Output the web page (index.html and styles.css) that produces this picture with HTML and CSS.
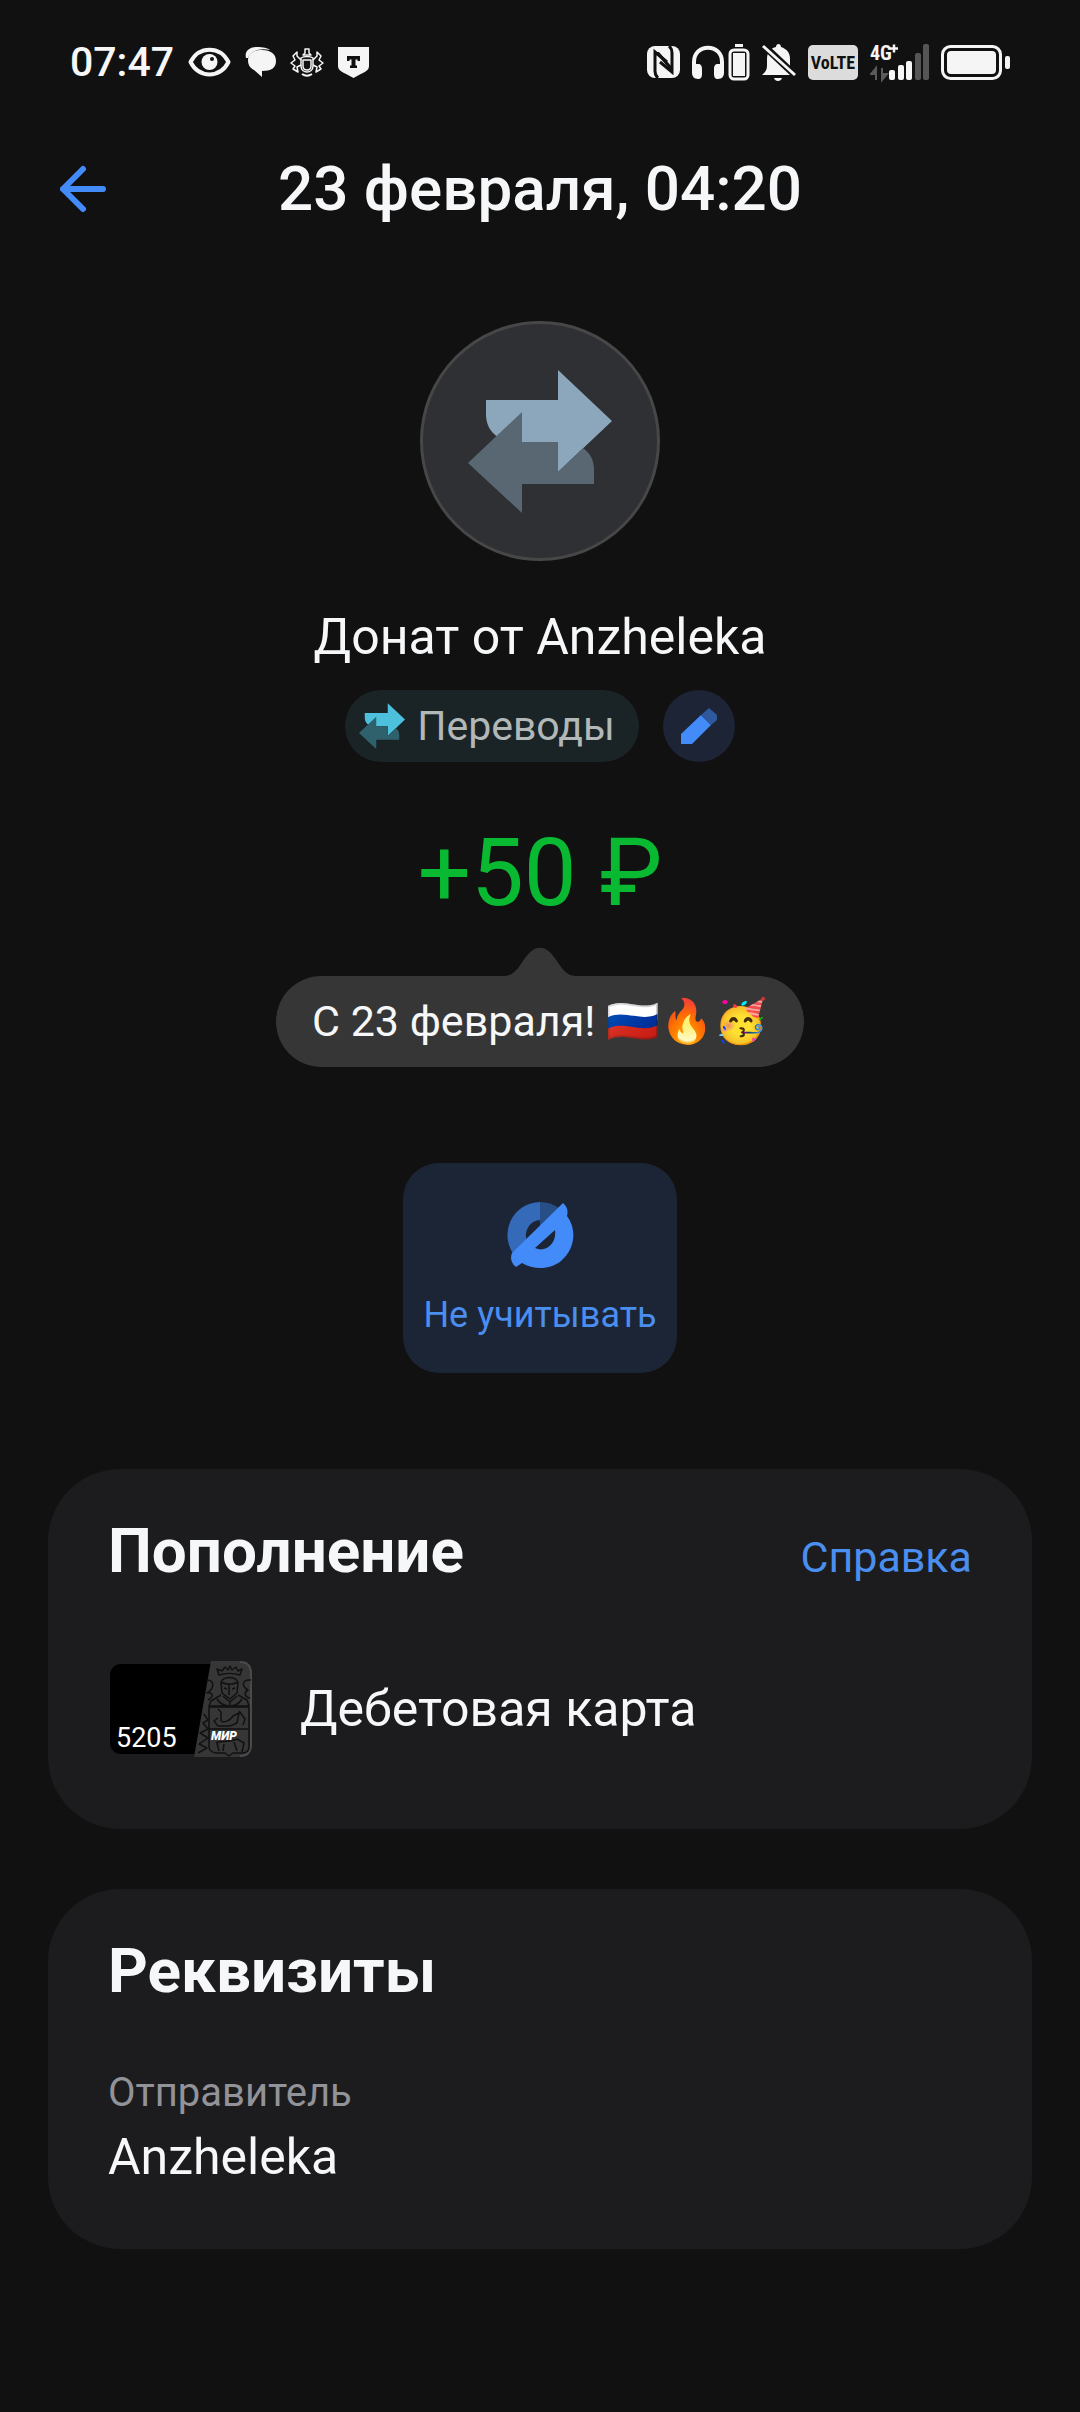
FILE: index.html
```html
<!DOCTYPE html>
<html lang="ru">
<head>
    <meta charset="UTF-8">
    <meta name="viewport" content="width=device-width, initial-scale=1">
    <title>Донат от Anzheleka</title>
    <link rel="stylesheet" href="styles.css">
</head>
<body>
    <div class="status-bar">
        <div class="status-left">
            <span class="time">07:47</span>
            <svg width="43" height="30" viewBox="0 0 43 30" fill="none">
                <path d="M2.500 15C11-1.500 32-1.500 40.500 15C32 31.500 11 31.500 2.500 15Z" stroke="#f5f5f5" stroke-width="4" stroke-linejoin="round"/>
                <circle cx="21.500" cy="15" r="8" fill="#f5f5f5"/>
                <circle cx="24" cy="12" r="2" fill="#111"/>
            </svg>
            <svg width="31" height="32" viewBox="0 0 31 32">
                <path d="M1 12C-1 4 6 1 12 1C18 1 23 2 25 4C16 2 6 4 3 12Z" fill="#f5f5f5"/>
                <path d="M17 4C26 4 31 8 31 15C31 22 26 25 17 25V31L9 24C5 22 3 19 3 14C3 8 8 4 17 4Z" fill="#f5f5f5"/>
            </svg>
            <svg width="34" height="30" viewBox="0 0 34 30" fill="none" stroke="#f5f5f5" stroke-width="1.500" stroke-linejoin="round">
                <path d="M15 2H19V6L21 8H13L15 6Z"/>
                <path d="M11 11C14 9 20 9 23 11V19C23 23 20 25 17 25C14 25 11 23 11 19Z"/>
                <path d="M13 13H21V19C21 22 19 23 17 23C15 23 13 22 13 19Z"/>
                <path d="M11 13L7 9V5L3 9L5 13L1 16L5 19L3 22L8 25L7 20L11 18"/>
                <path d="M23 13L27 9V5L31 9L29 13L33 16L29 19L31 22L26 25L27 20L23 18"/>
                <path d="M12 27C15 29 19 29 22 27" stroke-width="2"/>
            </svg>
            <svg width="31" height="32" viewBox="0 0 31 32">
                <path d="M0 1H31V20C31 25 26 26 15.500 32C5 26 0 25 0 20Z" fill="#f5f5f5"/>
                <path d="M9 10H22V15H19.500V13.500H17.500V19.500H19V22H12V19.500H13.500V13.500H11.500V15H9Z" fill="#111"/>
            </svg>
        </div>
        <div class="status-right">
            <svg width="33" height="32" viewBox="0 0 33 32" fill="none">
                <rect width="33" height="32" rx="8" fill="#f5f5f5"/>
                <path d="M11 32C8.500 30 8 28 8 25V6L20 16" stroke="#111" stroke-width="3"/>
                <path d="M22 0C24.500 2 25 4 25 7V26L13 16" stroke="#111" stroke-width="3"/>
                <path d="M8 6L25 26V21L12 6Z" fill="#111"/>
            </svg>
            <svg width="58" height="37" viewBox="0 0 58 37" fill="none">
                <path d="M2 25V18C2 -1 30 -1 30 18V25" stroke="#f5f5f5" stroke-width="4"/>
                <path d="M0 20H6C9 20 10 22 10 25V30C10 33 9 35 6 35C2 35 0 32 0 29ZM32 20H26C23 20 22 22 22 25V30C22 33 23 35 26 35C30 35 32 32 32 29Z" fill="#f5f5f5"/>
                <path d="M43 1.500H51" stroke="#f5f5f5" stroke-width="3"/>
                <rect x="38" y="6" width="18" height="29" rx="4" stroke="#f5f5f5" stroke-width="3"/>
                <rect x="41" y="9" width="12" height="23" fill="#f5f5f5"/>
            </svg>
            <svg width="34" height="37" viewBox="0 0 34 37">
                <path d="M0 31C3 28 5 26 5 22V15C5 8 9 4 14 3C14 -1 19 -1 19 3C25 5 28 9 28 15V22C28 26 29 28 30 31Z" fill="#f5f5f5"/>
                <path d="M12 34H20C19 38 13 38 12 34Z" fill="#f5f5f5"/>
                <path d="M1 1L34 32" stroke="#111" stroke-width="7"/>
                <path d="M1 2L33 31" stroke="#f5f5f5" stroke-width="3"/>
            </svg>
            <span class="volte">VoLTE</span>
            <svg class="signal" width="59" height="44" viewBox="0 -4 59 44">
                <text x="0" y="16">4G</text>
                <path d="M20 4.500H28M24 .5V8.500" stroke="#f5f5f5" stroke-width="2.500"/>
                <path d="M6 36V24L1 30H5M12 24V36L17 30H12" fill="#5a5a5a" stroke="#5a5a5a" stroke-width="2"/>
                <g fill="#f5f5f5">
                    <rect x="19" y="26" width="6" height="10" rx="2"/>
                    <rect x="28" y="21" width="6" height="15" rx="2"/>
                    <rect x="36" y="17" width="6" height="19" rx="2"/>
                </g>
                <g fill="#555">
                    <rect x="45" y="9" width="6" height="27" rx="2"/>
                    <rect x="53" y="0" width="6" height="36" rx="2"/>
                </g>
            </svg>
            <svg width="69" height="35" viewBox="0 0 69 35" fill="none">
                <rect x="1.500" y="1.500" width="58" height="32" rx="8" stroke="#f5f5f5" stroke-width="3"/>
                <rect x="6" y="6" width="49" height="23" rx="4" fill="#f5f5f5"/>
                <rect x="64" y="11" width="5" height="13" rx="2" fill="#f5f5f5"/>
            </svg>
        </div>
    </div>

    <header class="header">
        <button class="back" aria-label="Назад">
            <svg width="48" height="48" viewBox="0 0 48 48" fill="none" stroke="#428bf9" stroke-width="6" stroke-linecap="round" stroke-linejoin="round">
                <path d="M23 4L3 24L23 44M3 24H43"/>
            </svg>
        </button>
        <h1>23 февраля, 04:20</h1>
    </header>

    <main>
        <section class="summary">
            <div class="avatar">
                <svg width="144" height="144" viewBox="0 0 144 144">
                    <path d="M18 31H90V1L144 52L90 103V73H50C30 73 18 62 18 45Z" fill="#8ca7bb"/>
                    <path d="M54 43V73H90V103L115 79C122 84 126 91 126 100V115H54V144L0 94Z" fill="#596772"/>
                </svg>
            </div>
            <h2 class="name">Донат от Anzheleka</h2>
            <div class="chips">
                <button class="category">
                    <svg width="46" height="46" viewBox="0 0 144 144">
                        <path d="M18 31H90V1L144 52L90 103V73H50C30 73 18 62 18 45Z" fill="#4cc0dc"/>
                        <path d="M54 43V73H90V103L115 79C122 84 126 91 126 100V115H54V144L0 94Z" fill="#2f616d"/>
                    </svg>
                    Переводы
                </button>
                <button class="edit" aria-label="Изменить категорию">
                    <svg width="36" height="36" viewBox="0 0 36 36">
                        <path d="M0 36V26L20 7L30 17L11 36Z" fill="#428bf9"/>
                        <path d="M20 7L28 0L35 6C37 8 37 11 35 13L30 17Z" fill="#2e599d"/>
                    </svg>
                </button>
            </div>
            <p class="amount">+50 ₽</p>
            <div class="bubble">
                <svg class="bubble-tail" width="70" height="28" viewBox="0 0 70 28">
                    <path d="M0 28C14 27 17 9 28 2C32 -1 38 -1 42 2C53 9 56 27 70 28Z" fill="#363636"/>
                </svg>
                <p class="message">С 23 февраля! 🇷🇺🔥🥳</p>
            </div>
            <button class="action">
                <svg width="68" height="68" viewBox="0 0 68 68">
                    <path d="M34 1A33 33 0 0 0 9 55L23 43A15 15 0 0 1 34 19Z" fill="#356ab9"/>
                    <path d="M34 1A33 33 0 0 1 53 7L34 26Z" fill="#284e88"/>
                    <path fill-rule="evenodd" d="M57 2C62 6 62 11 61 15C72 30 68 49 55 60C44 69 28 69 16 62L10 66C5 62 4 57 6 52ZM49 29L29 47C39 52 51 43 49 29Z" fill="#428bf9"/>
                </svg>
                Не учитывать
            </button>
        </section>

        <section class="card">
            <div class="card-header">
                <h2>Пополнение</h2>
                <a href="#">Справка</a>
            </div>
            <div class="account">
                <svg class="bank-card" width="144" height="96" viewBox="0 0 144 96" fill="none">
                    <rect y="3" width="130" height="90" rx="11" fill="#000"/>
                    <path d="M101 0H130C138 0 142 5 142 13V83C142 91 138 96 130 96H84Z" fill="#363637"/>
                    <path d="M130 1C138 1 141 6 141 13V83C141 91 138 95 130 95" stroke="#4a4a4b" stroke-width="2"/>
                    <g stroke="#111" stroke-width="1.500" stroke-linejoin="round">
                        <path d="M109 14L107 8L112 10L115 6L118 9L120 5L122 9L126 6L128 10L132 8L130 14C124 12 115 12 109 14Z"/>
                        <path d="M111 21C114 15 125 15 128 21L127 32L120 38L112 32ZM111 21C116 24 123 24 128 21M119 23V34M114 27L117 28M125 27L122 28"/>
                        <path d="M111 34L101 40L99 45H139L137 39L128 34M113 35L120 41L127 35M107 38C110 43 115 45 120 45M132 38C129 43 125 45 120 45M120 40V44"/>
                        <path d="M99 46V86C99 90 103 92 107 92H115L119 95L123 92H132C137 92 139 90 139 86V46ZM99 68H139"/>
                        <path d="M108 48L111 51V60C114 62 120 60 123 55L129 52L127 62L120 65H108L104 60L108 57M129 50L135 58L133 64M106 82C110 79 118 82 127 78L134 82L132 91M107 82L109 90M114 83L113 90M124 81L127 90"/>
                        <path d="M98 19C104 20 105 27 97 32C102 31 105 35 98 39M141 19C132 18 131 25 138 29C134 31 134 36 140 37M94 53L98 59L93 62L98 68L90 72L98 77L89 83L97 87L88 92"/>
                    </g>
                    <text class="card-number" x="6" y="86">5205</text>
                    <text class="card-system" x="101" y="79">МИР</text>
                </svg>
                <span>Дебетовая карта</span>
            </div>
        </section>

        <section class="card">
            <div class="card-header">
                <h2>Реквизиты</h2>
            </div>
            <dl class="details">
                <dt>Отправитель</dt>
                <dd>Anzheleka</dd>
            </dl>
        </section>
    </main>
</body>
</html>
```
FILE: styles.css
```css
* {
    box-sizing: border-box;
}
body {
    margin: 0;
    background-color: #111;
    color: #f6f7f8;
    font-family: Roboto, "Noto Sans", sans-serif;
    font-size: 50px;
    line-height: 64px;
}
h1, h2, p, dl, dd {
    margin: 0;
}
button {
    padding: 0;
    border: none;
    background: none;
    font-family: inherit;
    cursor: pointer;
}
svg {
    display: block;
    flex-shrink: 0;
}

/* Строка состояния */
.status-bar {
    display: flex;
    justify-content: space-between;
    align-items: center;
    height: 124px;
    padding: 0 70px;
}
.status-left, .status-right {
    display: flex;
    align-items: center;
}
.status-left {
    gap: 14px;
}
.status-right {
    gap: 12px;
}
.time {
    font-size: 41px;
    font-weight: 500;
}
.volte {
    width: 50px;
    border-radius: 5px;
    background-color: #dcdcdc;
    color: #111;
    font-family: "Roboto Condensed", "Liberation Sans Narrow", Roboto, sans-serif;
    font-size: 18px;
    font-weight: 700;
    line-height: 35px;
    text-align: center;
}
.signal {
    fill: #f5f5f5;
    font-family: "Roboto Condensed", "Liberation Sans Narrow", Roboto, sans-serif;
    font-size: 20px;
    font-weight: 700;
}

/* Шапка */
.header {
    display: grid;
    grid-template-columns: 48px 1fr 48px;
    align-items: center;
    height: 130px;
    padding: 0 60px;
}
.header h1 {
    font-size: 62px;
    font-weight: 500;
    text-align: center;
}

.summary {
    display: flex;
    flex-direction: column;
    align-items: center;
    padding-top: 67px;
}
.avatar {
    display: flex;
    justify-content: center;
    align-items: center;
    width: 240px;
    height: 240px;
    border: 3px solid #474748;
    border-radius: 50%;
    background-color: #2f3034;
}
.name {
    margin-top: 44px;
    font-size: 50px;
    font-weight: 400;
}
.chips {
    display: flex;
    gap: 24px;
    margin-top: 21px;
}
.category {
    display: flex;
    align-items: center;
    gap: 12px;
    height: 72px;
    padding: 0 24px 0 14px;
    border-radius: 36px;
    background-color: #1a2426;
    color: #b2b7b8;
    font-size: 41px;
}
.edit {
    display: flex;
    justify-content: center;
    align-items: center;
    width: 72px;
    height: 72px;
    border-radius: 50%;
    background-color: #1c2436;
}
.amount {
    margin-top: 55px;
    color: #08b931;
    font-size: 94px;
    line-height: 112px;
}
.bubble {
    display: flex;
    flex-direction: column;
    align-items: center;
    margin-top: 19px;
}
.message {
    padding: 13px 36px 14px;
    border-radius: 46px;
    background-color: #363636;
    font-size: 43px;
}
.action {
    display: flex;
    flex-direction: column;
    align-items: center;
    gap: 22px;
    margin-top: 96px;
    padding: 38px 20px 34px;
    border-radius: 36px;
    background-color: #1c2536;
    color: #4a8ef0;
    font-size: 36px;
    line-height: 48px;
}

/* Карточки */
.card {
    margin: 60px 48px 0;
    padding: 50px 60px 60px;
    border-radius: 72px;
    background-color: #1c1c1e;
}
.summary + .card {
    margin-top: 96px;
}
.card-header {
    display: flex;
    justify-content: space-between;
    align-items: baseline;
}
.card-header h2 {
    font-size: 62px;
    font-weight: 700;
}
.card-header a {
    color: #4a8ef0;
    font-size: 43px;
    text-decoration: none;
}
.account {
    display: flex;
    align-items: center;
    gap: 46px;
    margin: 72px 0 12px;
    padding-left: 2px;
}
.card-number {
    fill: #fff;
    font-size: 27px;
}
.card-system {
    fill: #fff;
    font-size: 12px;
    font-style: italic;
    font-weight: 900;
}
.details {
    margin-top: 58px;
}
.details dt {
    color: #929399;
    font-size: 40px;
}
```
